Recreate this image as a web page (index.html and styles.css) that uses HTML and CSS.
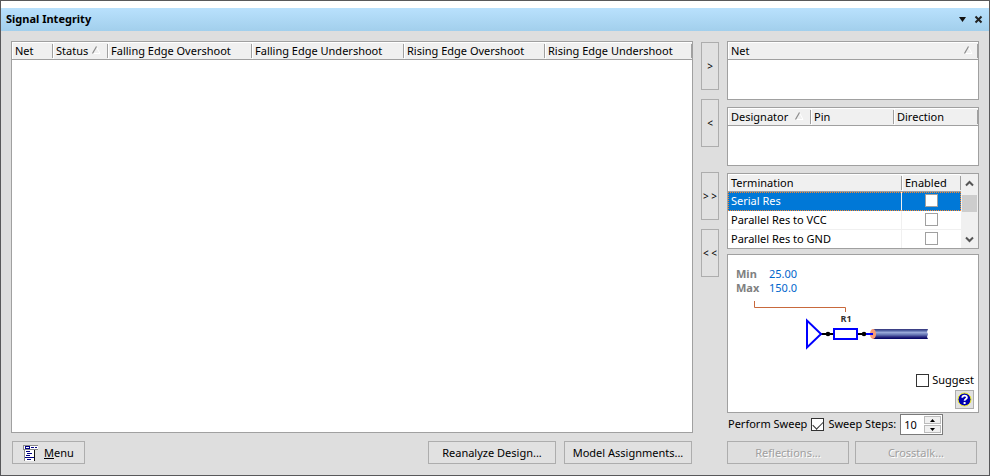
FILE: index.html
```html
<!DOCTYPE html>
<html lang="en">
<head>
<meta charset="utf-8">
<title>Signal Integrity</title>
<link rel="stylesheet" href="styles.css">
</head>
<body>
<div class="window">
  <header class="titlebar">
    <h1>Signal Integrity</h1>
    <button class="title-btn" type="button" aria-label="Panel menu">
      <svg width="9" height="9" viewBox="0 0 9 9"><path d="M1 2h7L4.500 7z" fill="#111"/></svg>
    </button>
    <button class="title-btn" type="button" aria-label="Close">
      <svg width="9" height="9" viewBox="0 0 9 9"><path d="M1.500 1.500l6 6M7.500 1.500l-6 6" stroke="#222" stroke-width="2"/></svg>
    </button>
  </header>
  <main class="content">
    <section class="results">
      <div class="panel grow">
        <table class="grid">
          <colgroup><col class="w-net"><col class="w-status"><col class="w-fo"><col class="w-fu"><col class="w-ro"><col></colgroup>
          <thead><tr>
            <th>Net</th>
            <th>Status<svg class="sort" width="9" height="9" viewBox="0 0 9 9"><path d="M4.500 1L8 7.500H.5" stroke="#fff" fill="none"/><path d="M.5 7.500L4.500 .5" stroke="#888" stroke-width="1.200"/></svg></th>
            <th>Falling Edge Overshoot</th>
            <th>Falling Edge Undershoot</th>
            <th>Rising Edge Overshoot</th>
            <th>Rising Edge Undershoot</th>
          </tr></thead>
        </table>
      </div>
      <div class="actions">
        <button class="btn menu" type="button">
          <svg width="15" height="16" viewBox="0 0 15 16" shape-rendering="crispEdges">
            <path d="M0 0h15v5H0zM2 5h9v11H2z" fill="#fff"/>
            <path d="M0 0h15v1H0zM0 0h1v5H0zM0 4h15v1H0zM1 5h1v11H1z" fill="#888"/>
            <path d="M2 1h5v3H2zM8 2h3v1H8zM12 2h2v1h-2zM3 6h4v1H3zM4 8h5v1H4zM3 10h4v1H3zM2 12h9v1H2zM4 14h4v1H4z" fill="#000080"/>
            <path d="M3 2h3v1H3z" fill="#fff"/>
            <path d="M11 5h1v11h-1z" fill="#111"/>
          </svg>
          <span><u>M</u>enu</span>
        </button>
        <button class="btn wide push" type="button">Reanalyze Design...</button>
        <button class="btn wide" type="button">Model Assignments...</button>
      </div>
    </section>
    <nav class="movers" aria-label="Move nets">
      <button class="btn" type="button">&gt;</button>
      <button class="btn" type="button">&lt;</button>
      <button class="btn all" type="button">&gt; &gt;</button>
      <button class="btn" type="button">&lt; &lt;</button>
    </nav>
    <section class="side">
      <div class="panel list">
        <table class="grid">
          <thead><tr><th><span class="spread">Net<svg class="sort" width="9" height="9" viewBox="0 0 9 9"><path d="M4.500 1L8 7.500H.5" stroke="#fff" fill="none"/><path d="M.5 7.500L4.500 .5" stroke="#888" stroke-width="1.200"/></svg></span></th></tr></thead>
        </table>
      </div>
      <div class="panel list">
        <table class="grid">
          <colgroup><col class="w-des"><col class="w-pin"><col></colgroup>
          <thead><tr>
            <th>Designator<svg class="sort far" width="9" height="9" viewBox="0 0 9 9"><path d="M4.500 1L8 7.500H.5" stroke="#fff" fill="none"/><path d="M.5 7.500L4.500 .5" stroke="#888" stroke-width="1.200"/></svg></th>
            <th>Pin</th><th>Direction</th>
          </tr></thead>
        </table>
      </div>
      <div class="panel terms">
        <table class="grid">
          <colgroup><col><col class="w-en"></colgroup>
          <thead><tr><th>Termination</th><th>Enabled</th></tr></thead>
          <tbody>
            <tr class="selected"><td>Serial Res</td><td><input type="checkbox" aria-label="Enable Serial Res"></td></tr>
            <tr><td>Parallel Res to VCC</td><td><input type="checkbox" aria-label="Enable Parallel Res to VCC"></td></tr>
            <tr><td>Parallel Res to GND</td><td><input type="checkbox" aria-label="Enable Parallel Res to GND"></td></tr>
          </tbody>
        </table>
        <div class="scrollbar">
          <button type="button" aria-label="Scroll up"><svg width="9" height="7" viewBox="0 0 9 7"><path d="M1 5.500L4.500 2 8 5.500" fill="none" stroke="#555" stroke-width="2"/></svg></button>
          <div class="thumb"></div>
          <button type="button" aria-label="Scroll down"><svg width="9" height="7" viewBox="0 0 9 7"><path d="M1 1.500L4.500 5 8 1.500" fill="none" stroke="#555" stroke-width="2"/></svg></button>
        </div>
      </div>
      <div class="panel preview">
        <dl class="range"><dt>Min</dt><dd>25.00</dd><dt>Max</dt><dd>150.0</dd></dl>
        <svg class="circuit" width="250" height="60" viewBox="0 0 250 60">
          <defs><linearGradient id="tube" x1="0" y1="0" x2="0" y2="1">
            <stop offset="0" stop-color="#303078"/><stop offset=".15" stop-color="#5060a0"/><stop offset=".35" stop-color="#98a8d8"/><stop offset=".6" stop-color="#6070b0"/><stop offset=".8" stop-color="#282880"/><stop offset="1" stop-color="#000060"/>
          </linearGradient></defs>
          <path d="M26.500 6v6.500h91V17" fill="none" stroke="#c8693c"/>
          <text class="ref" x="118" y="27" text-anchor="middle">R1</text>
          <path d="M93 39h13M129 39h10" stroke="#000" stroke-width="2"/>
          <path d="M79 25.500v27L93 39z" fill="none" stroke="#00f" stroke-width="2"/>
          <rect x="106" y="34" width="23" height="10" fill="#fff" stroke="#00f" stroke-width="2"/>
          <circle cx="100" cy="39" r="2.300"/><circle cx="136" cy="39" r="2.300"/>
          <path d="M145 34h55l-1 3 1 2-1 3 1 2h-55z" fill="url(#tube)"/>
          <ellipse cx="145" cy="39" rx="3" ry="5" fill="#f89a74"/>
          <path d="M138 39h7" stroke="#00f" stroke-width="2"/>
        </svg>
        <div class="corner">
          <label class="check"><input type="checkbox">Suggest</label>
          <button class="btn help" type="button" aria-label="Help"><svg width="15" height="15" viewBox="0 0 15 15"><circle cx="7.500" cy="7.500" r="6.500" fill="#0000b0" stroke="#f0f020"/><path d="M5.300 5.800c0-3 4.600-2.800 4.600-.3 0 1.700-2.300 1.400-2.300 3.300" fill="none" stroke="#fff" stroke-width="1.800"/><path d="M6.600 10h2v2h-2z" fill="#fff"/></svg></button>
        </div>
      </div>
      <div class="sweep">
        <label for="sweep">Perform Sweep</label>
        <input id="sweep" type="checkbox" checked>
        <label for="steps">Sweep Steps:</label>
        <div class="spinner">
          <input id="steps" type="number" value="10">
          <div class="spin-btns">
            <button type="button" aria-label="Increase"><svg width="5" height="3" viewBox="0 0 5 3"><path d="M0 3h5L2.500 0z"/></svg></button>
            <button type="button" aria-label="Decrease"><svg width="5" height="3" viewBox="0 0 5 3"><path d="M0 0h5L2.500 3z"/></svg></button>
          </div>
        </div>
      </div>
      <div class="analyses">
        <button class="btn" type="button" disabled>Reflections...</button>
        <button class="btn" type="button" disabled>Crosstalk...</button>
      </div>
    </section>
  </main>
</div>
</body>
</html>
```
FILE: styles.css
```css
* { box-sizing: border-box; }
body { margin: 0; font: 11px/16px "Noto Sans", "Open Sans", sans-serif; color: #000; }
button, input { font: inherit; color: inherit; margin: 0; padding: 0; }
svg { display: block; flex: none; }
.window { display: flex; flex-direction: column; min-height: 100vh; border: 1px solid #58585a; background: #dedede; }
.titlebar { display: flex; align-items: center; gap: 7px; height: 30px; padding: 0 6px 1px 5px; border-top: 7px solid #fff; background: linear-gradient(#b9e1fd, #a2cfec); }
.titlebar h1 { flex: 1; margin: 0; font-size: 11px; line-height: 16px; font-weight: 700; }
.title-btn { border: 0; background: none; }
.content { flex: 1; display: flex; align-items: stretch; padding: 10px 10px 11px; }
.results { flex: 1; min-width: 0; display: flex; flex-direction: column; gap: 8px; }
.panel { border: 1px solid #a0a0a0; background: #fff; }
.grow { flex: 1; }

.grid { width: 100%; border-collapse: separate; border-spacing: 0; table-layout: fixed; }
.grid th { height: 18px; padding: 0 3px; border-bottom: 1px solid #a0a0a0; text-align: left; font-weight: 400; white-space: nowrap;
  background: linear-gradient(#a0a0a0, #a0a0a0) right 2px / 1px 14px no-repeat, linear-gradient(#fff, #fff) left / 1px 100% no-repeat, linear-gradient(#fff, #fff) top / 100% 1px no-repeat, #f0f0f0; }
.sort { display: inline-block; margin-left: 4px; }
.sort.far { margin-left: 7px; }
.spread { display: flex; justify-content: space-between; align-items: center; padding-right: 2px; }
.w-net { width: 41px; }
.w-status { width: 55px; }
.w-fo { width: 144px; }
.w-fu { width: 152px; }
.w-ro { width: 141px; }
.w-des { width: 83px; }
.w-pin { width: 83px; }
.w-en { width: 59px; }

.btn { height: 23px; border: 1px solid #adadad; background: #e1e1e1; white-space: nowrap; }
.actions { display: flex; gap: 8px; padding: 0 1px; }
.wide { width: 128px; }
.push { margin-left: auto; }
.menu { display: flex; align-items: center; gap: 6px; width: 73px; padding-left: 10px; }

.movers { display: flex; flex-direction: column; gap: 9px; width: 18px; margin: 1px 8px 0; }
.movers .btn { height: 48px; font-size: 10px; }
.movers .all { margin-top: 16px; }

.side { width: 252px; display: flex; flex-direction: column; }
.list { height: 59px; margin-bottom: 7px; }
.terms { display: flex; height: 76px; margin-bottom: 5px; overflow: hidden; }
.terms .grid { flex: 1; }
.grid td { height: 19px; padding: 0 3px; border-bottom: 1px solid #f0f0f0; border-right: 1px solid #f0f0f0; }
.grid td:last-child { padding: 2px 1px 0 0; border-right: 0; vertical-align: top; }
.grid .selected td { color: #fff; background: #0078d7; border-bottom-color: #0078d7; }
.selected { outline: 1px dotted #ff8728; outline-offset: -1px; }
input[type="checkbox"] { appearance: none; display: block; width: 13px; height: 13px; border: 1px solid #333; background: #fff; }
.grid input[type="checkbox"] { margin: 0 auto; border-color: #a0a0a0; }
input[type="checkbox"]:checked::after { content: ""; display: block; width: 9px; height: 5px; border: solid #333; border-width: 0 0 1px 1px; transform: translate(1px, 2px) rotate(-45deg); }
.scrollbar { display: flex; flex-direction: column; width: 17px; background: #f0f0f0; }
.scrollbar button { display: flex; align-items: center; justify-content: center; height: 18px; border: 0; background: none; }
.thumb { height: 17px; margin: 3px 1px auto; background: #cdcdcd; }

.preview { flex: 1; display: flex; flex-direction: column; }
.range { display: grid; grid-template-columns: 33px auto; margin: 12px 0 0 8px; line-height: 14px; }
.range dt { color: #808080; font-weight: 700; }
.range dd { margin: 0; color: #0066cc; }
.ref { font: 700 9px "Open Sans", sans-serif; fill: #333; }
.corner { display: flex; flex-direction: column; align-items: flex-end; gap: 2px; margin-top: auto; padding: 0 4px 3px; }
.check { display: flex; align-items: center; gap: 3px; }
.help { display: flex; align-items: center; justify-content: center; width: 19px; height: 19px; }

.sweep { display: flex; align-items: center; gap: 4px; height: 21px; margin: 1px 0 6px; padding-left: 1px; white-space: nowrap; }
.sweep label { line-height: 20px; padding-bottom: 1px; }
.spinner { display: flex; width: 43px; height: 21px; border: 1px solid #7a7a7a; background: #fff; padding: 1px; }
.spinner input { flex: 1; min-width: 0; padding-left: 2px; border: 0; background: none; appearance: textfield; }
.spinner input::-webkit-inner-spin-button { display: none; }
.spin-btns { display: flex; flex-direction: column; gap: 1px; width: 17px; }
.spin-btns button { flex: 1; display: flex; align-items: center; justify-content: center; border: 1px solid #bbb; background: #f0f0f0; }
.analyses { display: flex; gap: 6px; padding-right: 2px; }
.analyses .btn { flex: 1; color: #a0a0a0; text-shadow: 1px 1px #fff; background: #dedede; }
```
